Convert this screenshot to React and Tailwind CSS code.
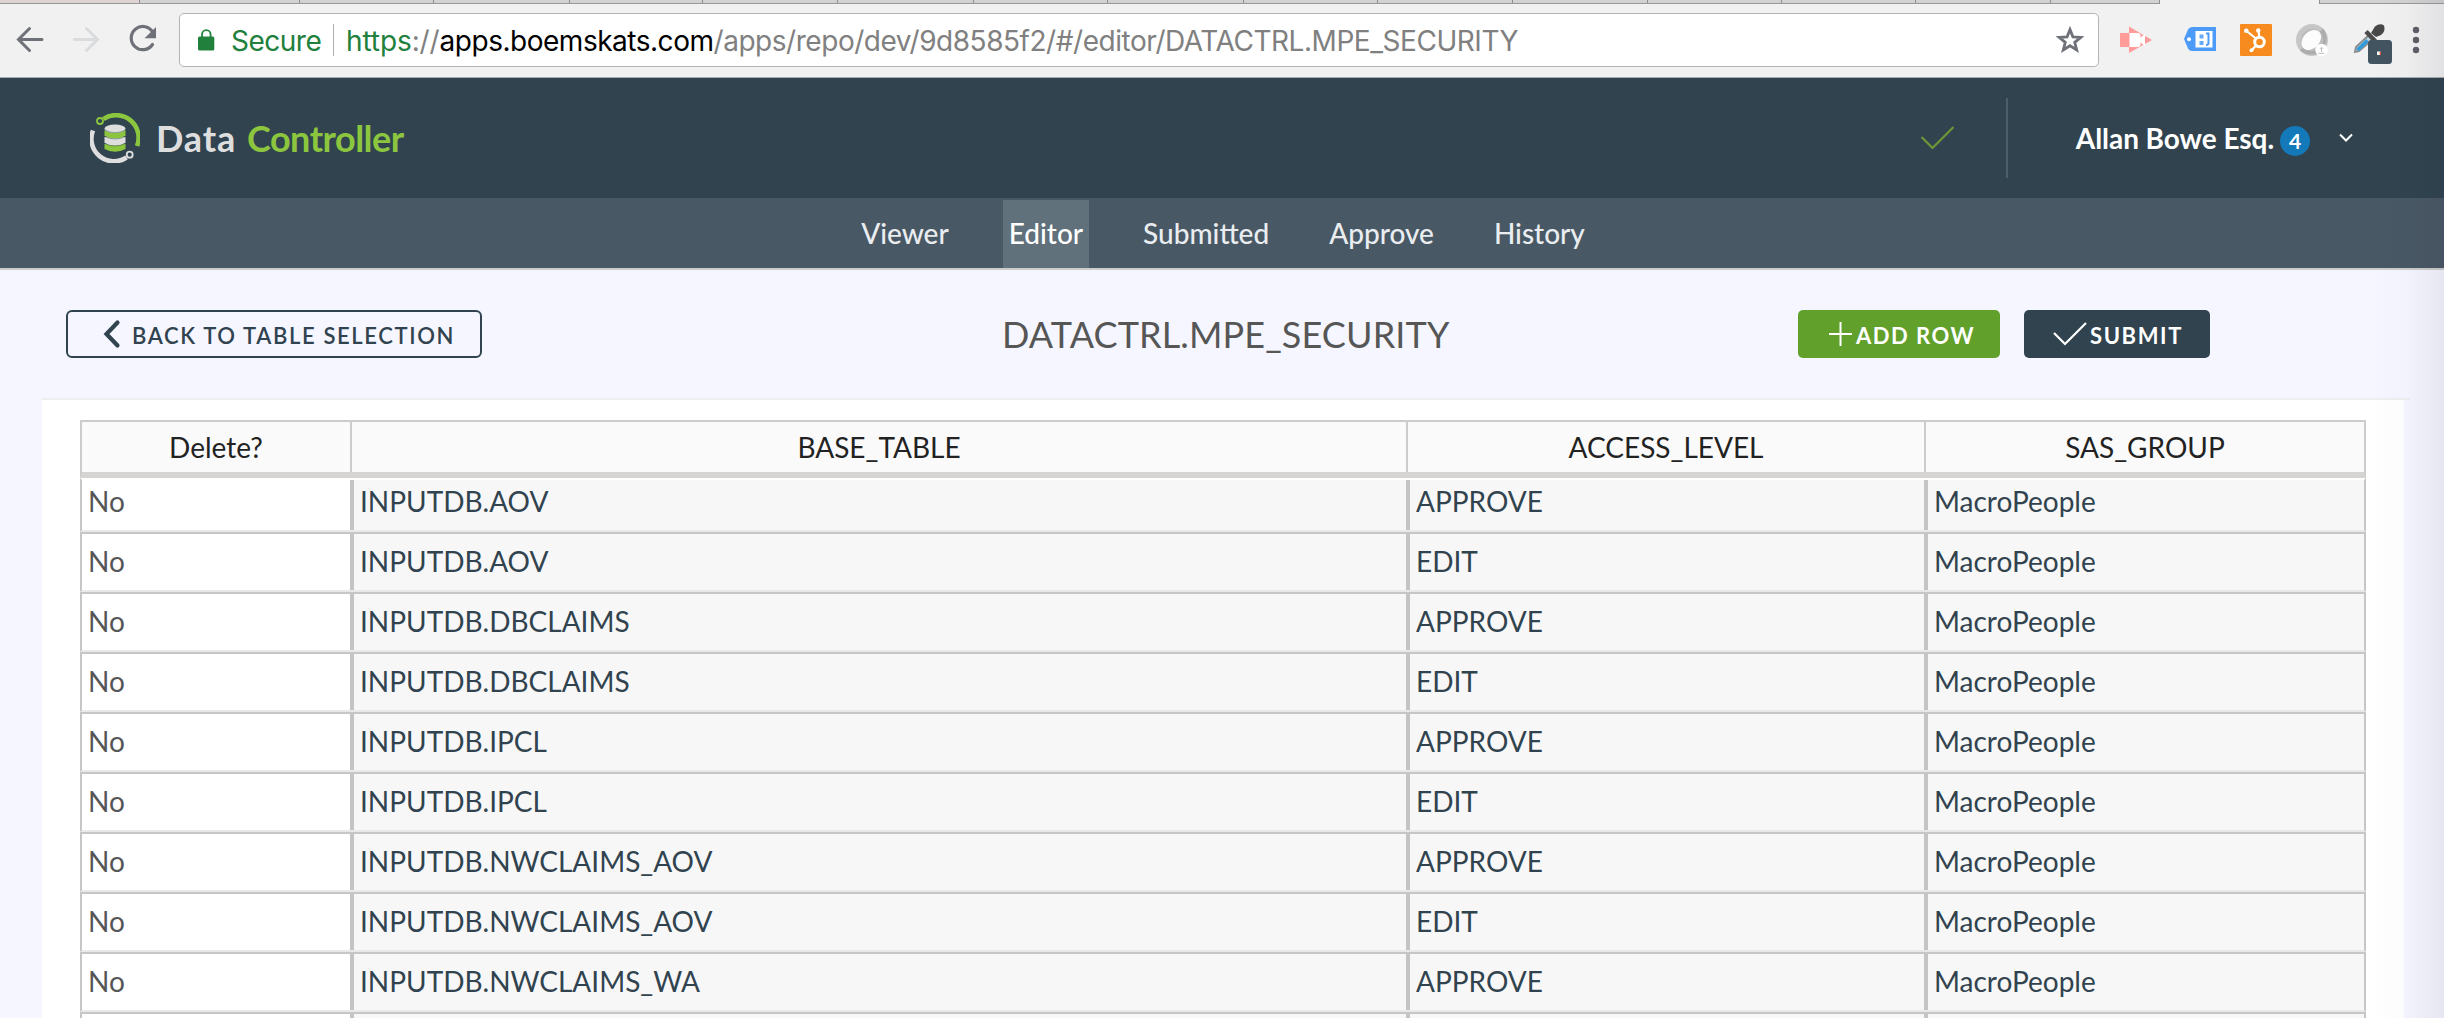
import React from "react";

const tabs = [
  "w-[160px]", "w-[134px]", "w-[136px]", "w-[133px]", "w-[135px]", "w-[136px]", "w-[134px]", "w-[136px]",
  "w-[134px]", "w-[135px]", "w-[135px]", "w-[134px]", "w-[134px]", "w-[135px]", "w-[109px]",
];

const nav = ["Viewer", "Editor", "Submitted", "Approve", "History"];

const rows = [
  ["INPUTDB.AOV", "APPROVE"],
  ["INPUTDB.AOV", "EDIT"],
  ["INPUTDB.DBCLAIMS", "APPROVE"],
  ["INPUTDB.DBCLAIMS", "EDIT"],
  ["INPUTDB.IPCL", "APPROVE"],
  ["INPUTDB.IPCL", "EDIT"],
  ["INPUTDB.NWCLAIMS_AOV", "APPROVE"],
  ["INPUTDB.NWCLAIMS_AOV", "EDIT"],
  ["INPUTDB.NWCLAIMS_WA", "APPROVE"],
];

function TabStrip() {
  return (
    <div className="flex h-1 overflow-hidden border-b border-[#999999] bg-[#d2d2d2]">
      <div className="w-[139px] shrink-0 bg-[#dfd4d2]" />
      {tabs.map((w, i) => (
        <div key={i} className={`${w} shrink-0 border-l border-[#8f8f8f] bg-[#d2d2d2]`} />
      ))}
    </div>
  );
}

function NavButtons() {
  return (
    <svg className="w-[179px] shrink-0" height="73" viewBox="0 4 179 73" fill="none">
      <g stroke="#6e7178" strokeWidth="3" strokeLinecap="round">
        <path d="M42 39.5H19M29.5 28.5L18.5 39.5L29.5 50.5" />
        <path stroke="#d9dbdc" d="M74.5 39.5H97M86.500 28.500L97.500 39.500L86.500 50.500" />
      </g>
      <path d="M153 32.500A11.600 11.600 0 1 0 152.500 44.500" stroke="#6e7178" strokeWidth="3.200" strokeLinecap="round" />
      <path d="M156 27V38.300H144.500Z" fill="#6e7178" />
    </svg>
  );
}

function Lock() {
  return (
    <svg className="mb-px ml-[18px] shrink-0" width="17" height="22" viewBox="0 0 17 22">
      <path d="M4 9V5.500a4.300 4.300 0 0 1 8.600 0V9" fill="none" stroke="#20803c" strokeWidth="1.800" />
      <rect x="0" y="7.500" width="16.300" height="14" rx="1.500" fill="#20803c" />
    </svg>
  );
}

function Star() {
  return (
    <svg className="mr-[13px] ml-auto shrink-0" width="30" height="30" viewBox="0 0 30 30">
      <path
        d="M15 4.500L17.900 11.800L25.800 12.300L19.700 17.300L21.700 25L15 20.700L8.300 25L10.300 17.300L4.200 12.300L12.100 11.800Z"
        fill="none" stroke="#6e7178" strokeWidth="2.800"
      />
    </svg>
  );
}

function Extensions() {
  return (
    <svg className="w-[345px] shrink-0" height="73" viewBox="2099 4 345 73">
      <path d="M2129 26.500L2152 40L2129 53Z" fill="#ff9c9a" />
      <path d="M2120 33h9.500v14h-9.500z" fill="#ff9c9a" />
      <path d="M2129.500 33h8.500q2.500 0 2.500 2.500v2l4.500-3.500v12l-4.500-3.500v2q0 2.500-2.500 2.500h-8.500z" fill="#fff" />

      <path d="M2192 27h24v24h-24q-2.500 0-4-2.500l-4-9.500 4-9.500q1.500-2.500 4-2.500z" fill="#4c9bf8" />
      <circle cx="2189" cy="39.300" r="2" fill="#fff" />
      <path d="M2195.500 31h17v16.500h-17z" fill="#fff" />
      <path d="M2199.500 34.500h4v4h-4zM2199.500 41h4v4h-4z" fill="#67abf8" />
      <path d="M2206 33.500h2.500v9.500q0 2-2.500 2" fill="none" stroke="#4c9bf8" strokeWidth="2" />

      <rect x="2240" y="24" width="32" height="32" rx="1" fill="#f78b1f" />
      <g stroke="#fff" strokeWidth="2.200" fill="none">
        <path d="M2246.500 31L2256 38.500M2258.500 31L2259.300 37M2256.500 45L2251.500 50.500" />
        <circle cx="2259.500" cy="42" r="4.800" strokeWidth="3" />
      </g>
      <g fill="#fff">
        <circle cx="2246.300" cy="30.700" r="2.300" />
        <circle cx="2258.300" cy="30.500" r="2.200" />
        <circle cx="2251.500" cy="50.300" r="2" />
      </g>

      <circle cx="2312" cy="40" r="16" fill="#c6c6c6" />
      <path d="M2323 28.500A16 16 0 0 1 2300 50.600L2312 40Z" fill="#acacac" />
      <circle cx="2312" cy="40" r="11.200" fill="#bdbdbd" />
      <ellipse cx="2311.300" cy="40" rx="8.300" ry="11.300" transform="rotate(42 2311.300 40)" fill="#fcfcfc" />
      <circle cx="2321.500" cy="50" r="6.200" fill="#fff" />
      <path d="M2321.500 52V47.500M2320 48.800l1.500-1.500 1.500 1.500M2318.500 53.300h6" stroke="#bdbdbd" fill="none" />

      <path d="M2369 35L2356 47L2355 52L2359 51L2373 39Z" fill="#b9d3e2" stroke="#8d8f91" strokeWidth="2" />
      <path d="M2367.500 40.500L2357.500 50" stroke="#2f9bdb" strokeWidth="3.500" />
      <path d="M2366 31.500L2376 42" stroke="#4b4b4b" strokeWidth="4.500" />
      <path d="M2371 33L2375 26.500Q2380 22.500 2384 25.500Q2386 31 2381 35L2376 37Z" fill="#484848" />
      <rect x="2368" y="40" width="24" height="24" rx="3.500" fill="#435461" />
      <path d="M2377 51.500h3.500v3.500h-3.500z" fill="#fff" />
      <path d="M2379.700 52h1.300v3h-1.300z" fill="#e5533d" />

      <g fill="#5c5f65">
        <circle cx="2416" cy="30" r="3.200" />
        <circle cx="2416" cy="40" r="3.200" />
        <circle cx="2416" cy="50" r="3.200" />
      </g>
    </svg>
  );
}

function Toolbar() {
  return (
    <div className="flex h-[74px] border-b border-[#a9adaf] bg-[#f1f1f1]">
      <NavButtons />
      <div className="mt-[9px] flex h-[54px] w-[1920px] shrink-0 items-center rounded-[5px] border border-[#b4b4b4] bg-white font-['Inter',sans-serif] text-[28px] leading-[52px] whitespace-nowrap">
        <Lock />
        <span className="mt-[2px] ml-[16px] w-[102px] tracking-[-0.5px] text-[#20803c]">Secure</span>
        <span className="h-8 w-px bg-[#b0b0b0]" />
        <span className="mt-[2px] ml-[12px] tracking-[-0.1px] text-[#20803c]">https</span>
        <span className="mt-[2px] tracking-[-0.1px] text-[#808080]">://</span>
        <span className="mt-[2px] tracking-[-0.48px] text-black">apps.boemskats.com</span>
        <span className="mt-[2px] tracking-[-0.46px] text-[#808080]">/apps/repo/dev/9d8585f2/#/editor/DATACTRL.MPE_SECURITY</span>
        <Star />
      </div>
      <Extensions />
    </div>
  );
}

function Logo() {
  return (
    <svg width="50" height="50" viewBox="0 0 50 50" fill="none">
      <path d="M13.500 6A22.500 22.500 0 0 1 47 33" stroke="#8cc63f" strokeWidth="4.600" />
      <circle cx="10" cy="8" r="3" stroke="#8cc63f" strokeWidth="1.800" />
      <path d="M3 17.500A22.500 22.500 0 0 0 36.500 44.500" stroke="#dededf" strokeWidth="4.600" />
      <circle cx="39.700" cy="41.700" r="3" stroke="#dededf" strokeWidth="1.800" />
      <path d="M14.500 31v5q10.500 5.500 21 0v-5z" fill="#8cc63f" />
      <path d="M14.500 24v6q10.500 5 21 0v-6z" fill="#dededf" />
      <path d="M14.500 17v6q10.500 5 21 0v-6z" fill="#8cc63f" />
      <ellipse cx="25" cy="15.800" rx="10.500" ry="4.200" fill="#dededf" />
      <path d="M14.500 17q10.500 5.500 21 0M14.500 23.500q10.500 5 21 0M14.500 30.500q10.500 5 21 0" stroke="#31434f" strokeWidth="0.900" strokeOpacity="0.500" />
    </svg>
  );
}

function Header() {
  return (
    <header className="flex h-[120px] items-center bg-[#31434f] pr-[90px] pl-[90px] text-white">
      <Logo />
      <div className="ml-[16px] flex text-[36px] leading-[44px] font-bold">
        <span className="w-[91px] tracking-[0.9px] text-[#dededf]">Data</span>
        <span className="tracking-[-0.5px] text-[#8cc63f]">Controller</span>
      </div>
      <svg className="ml-auto" width="36" height="26" viewBox="0 0 36 26" fill="none">
        <path d="M1.500 12L12.500 23L33.500 2" stroke="#6d9636" strokeWidth="2.200" />
      </svg>
      <div className="ml-[50px] h-[80px] w-[2px] bg-[#4d5e6b]" />
      <span className="ml-[68px] text-[28px] leading-[34px] font-bold tracking-[-0.05px]">Allan Bowe Esq.</span>
      <span className="mt-[6px] ml-[6px] flex size-[30px] items-center justify-center rounded-full bg-[#1479b8] text-[21px] leading-[30px] font-bold">4</span>
      <svg className="ml-[28px]" width="16" height="12" viewBox="0 0 16 12" fill="none">
        <path d="M2 2.500L8 8.500L14 2.500" stroke="#fff" strokeWidth="2" />
      </svg>
    </header>
  );
}

function Nav() {
  return (
    <nav className="flex h-[72px] justify-center gap-[48px] border-b-2 border-[#cccccc] bg-[#495865] pl-[2px] text-[28px] leading-[70px] font-medium text-[#eaedf0]">
      {nav.map((n) => (
        <a key={n} className={n === "Editor" ? "mt-[2px] bg-[#61717b] px-[6px] leading-[66px] text-white" : "px-[6px]"}>{n}</a>
      ))}
    </nav>
  );
}

function Actions() {
  return (
    <div className="flex h-[128px] items-start pt-[40px] pl-[66px]">
      <button className="flex h-[48px] w-[416px] items-center rounded-[6px] border-2 border-[#31434f] pl-[34px] text-[22px] font-semibold tracking-[1.63px] text-[#31434f]">
        <svg width="20" height="30" viewBox="0 0 20 30" fill="none">
          <path d="M15.500 3.500L4.500 15L15.500 26.500" stroke="#31434f" strokeWidth="4.200" strokeLinecap="round" />
        </svg>
        <span className="mt-[4px] ml-[10px] leading-[26px] whitespace-nowrap">BACK TO TABLE SELECTION</span>
      </button>
      <h1 className="ml-[520px] w-[796px] text-[36px] leading-[48px] tracking-[0.13px] text-[#565656]">DATACTRL.MPE_SECURITY</h1>
      <button className="flex h-[48px] w-[202px] items-center rounded-[5px] bg-[#62a02c] pl-[30px] text-[22px] font-bold tracking-[1.5px] text-white">
        <svg width="26" height="26" viewBox="0 0 26 26" fill="none">
          <path d="M12.500 1V25M1 13H24" stroke="#fff" strokeWidth="2" />
        </svg>
        <span className="mt-[4px] ml-[2px] leading-[26px] whitespace-nowrap">ADD ROW</span>
      </button>
      <button className="ml-[24px] flex h-[48px] w-[186px] items-center rounded-[5px] bg-[#31434f] pl-[28px] text-[22px] font-bold tracking-[1.6px] text-white">
        <svg width="36" height="26" viewBox="0 0 36 26" fill="none">
          <path d="M2 12L13 23L34 2" stroke="#fff" strokeWidth="2.200" />
        </svg>
        <span className="mt-[4px] ml-[2px] leading-[26px]">SUBMIT</span>
      </button>
    </div>
  );
}

function Row({ base, level, group, first }) {
  const cell = first ? "pl-[6px]" : "pt-[6px] pl-[6px]";
  return (
    <div
      className={
        first
          ? "grid h-[54px] grid-cols-[268px_1056px_518px_440px] border-x-2 border-t-2 border-b-2 border-x-[#c6c6c6] border-t-white border-b-[#e8e8e8]"
          : "grid h-[60px] grid-cols-[268px_1056px_518px_440px] border-2 border-[#c6c6c6] border-b-[#e8e8e8]"
      }
    >
      <div className={`${cell} bg-white text-[#565656]`}>{base && "No"}</div>
      <div className={`${cell} border-l-4 border-[#c4c4c4] bg-[#f7f7f7]`}>{base}</div>
      <div className={`${cell} border-l-4 border-[#c4c4c4] bg-[#f7f7f7]`}>{level}</div>
      <div className={`${cell} border-l-4 border-[#c4c4c4] bg-[#f7f7f7]`}>{group}</div>
    </div>
  );
}

function Table() {
  return (
    <>
      <div className="ml-[42px] h-[2px] w-[2368px] bg-[#eeeeee]" />
      <div className="ml-[42px] h-[618px] w-[2362px] overflow-hidden bg-white pt-[20px] pl-[38px] text-[28px] leading-[42px] text-[#31434f]">
        <div className="w-[2286px]">
          <div className="grid h-[58px] grid-cols-[268px_1056px_518px_440px] border-x-2 border-t-2 border-b-[6px] border-[#cccccc] border-b-[#d5d4d2] bg-[#fafafa] text-center leading-[50px] text-[#222222]">
            <div>Delete?</div>
            <div className="border-l-2 border-[#cccccc]">BASE_TABLE</div>
            <div className="border-l-2 border-[#cccccc]">ACCESS_LEVEL</div>
            <div className="border-l-2 border-[#cccccc]">SAS_GROUP</div>
          </div>
          {rows.map(([base, level], i) => (
            <Row key={i} base={base} level={level} group="MacroPeople" first={i === 0} />
          ))}
          <Row />
        </div>
      </div>
    </>
  );
}

export default function App() {
  return (
    <div className="relative h-[1018px] w-[2444px] overflow-hidden bg-[#f5f6ff] font-['Lato',sans-serif]">
      <TabStrip />
      <div className="absolute top-0 left-[2159px] h-1 w-[161px] border-x border-[#8f8f8f] bg-[#f1f1f1]" />
      <Toolbar />
      <Header />
      <Nav />
      <Actions />
      <Table />
      <div className="pointer-events-none absolute inset-y-0 right-0 w-[74px] bg-linear-to-r from-[#20204000] via-[#20204004] to-[#20204013]" />
    </div>
  );
}
